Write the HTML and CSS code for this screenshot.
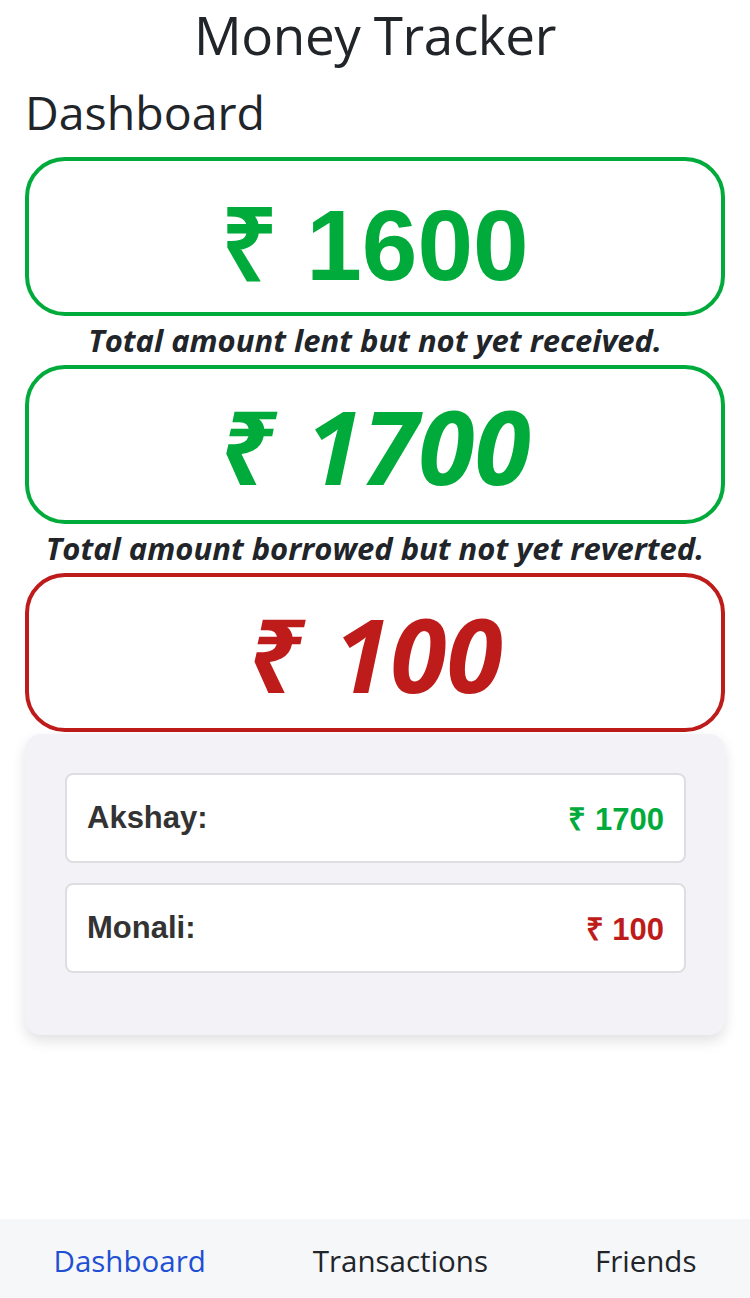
FILE: index.html
```html
<!DOCTYPE html>
<html lang="en">
<head>
<meta charset="utf-8">
<title>Money Tracker</title>
<link rel="stylesheet" href="styles.css">
</head>
<body>
<div class="page">
  <main class="main">
    <h1 class="title">Money Tracker</h1>
    <h2 class="heading">Dashboard</h2>
    <div class="amount-box green">
      <span class="amount plain">₹ 1600</span>
    </div>
    <p class="caption">Total amount lent but not yet received.</p>
    <div class="amount-box green">
      <span class="amount italic">₹ 1700</span>
    </div>
    <p class="caption">Total amount borrowed but not yet reverted.</p>
    <div class="amount-box red">
      <span class="amount italic">₹ 100</span>
    </div>
    <section class="panel">
      <div class="friend-card">
        <span class="friend-name">Akshay:</span>
        <span class="friend-amount pos">₹ 1700</span>
      </div>
      <div class="friend-card">
        <span class="friend-name">Monali:</span>
        <span class="friend-amount neg">₹ 100</span>
      </div>
    </section>
  </main>
  <nav class="bottom-nav">
    <a class="nav-item active">Dashboard</a>
    <a class="nav-item">Transactions</a>
    <a class="nav-item">Friends</a>
  </nav>
</div>
</body>
</html>
```

FILE: styles.css
```css
html, body {
  margin: 0;
  padding: 0;
  background: #ffffff;
}
body {
  font-family: "Open Sans", "Noto Sans", sans-serif;
  color: #212529;
}
.page {
  min-height: 100vh;
  display: flex;
  flex-direction: column;
}
.main {
  flex: 1;
  padding: 0 25px;
}
.title {
  margin: 0;
  text-align: center;
  font-size: 53px;
  font-weight: 500;
  letter-spacing: -0.4px;
  line-height: 69px;
}
.heading {
  margin: 16px 0 18px;
  font-size: 46.5px;
  font-weight: 500;
  line-height: 54px;
}
.amount-box {
  box-sizing: border-box;
  height: 159px;
  border: 4px solid;
  border-radius: 40px;
  display: flex;
  align-items: center;
  justify-content: center;
}
.amount-box.green { border-color: #00aa3b; color: #00aa3b; }
.amount-box.red { border-color: #be1b1b; color: #be1b1b; }
.amount {
  font-size: 100px;
  font-weight: 700;
  white-space: nowrap;
}
.amount.plain {
  font-family: "Liberation Sans", Arial, sans-serif;
  padding-top: 8px;
}
.amount.italic {
  font-size: 102px;
  font-style: italic;
  padding-top: 2px;
  word-spacing: 4px;
}
.caption {
  margin: 0;
  text-align: center;
  font-size: 31px;
  font-weight: 700;
  font-style: italic;
  line-height: 49px;
  white-space: nowrap;
}
.panel {
  margin-top: 2px;
  background: #f3f3f7;
  border-radius: 16px;
  padding: 39px 39px 42px 40px;
  box-shadow: 0 6px 14px rgba(0, 0, 0, 0.12);
}
.friend-card {
  box-sizing: border-box;
  height: 90px;
  margin-bottom: 20px;
  background: #ffffff;
  border: 2px solid #dedee2;
  border-radius: 8px;
  padding: 0 20px;
  display: flex;
  align-items: center;
  justify-content: space-between;
  font-family: "Liberation Sans", Arial, sans-serif;
  font-weight: 700;
  font-size: 31px;
}
.friend-name { color: #333333; }
.friend-amount.pos { color: #00aa3b; }
.friend-amount.neg { color: #be1b1b; }
.bottom-nav {
  height: 79px;
  background: #f6f7f9;
  display: flex;
  justify-content: space-around;
  align-items: center;
}
.nav-item {
  font-size: 29.5px;
  color: #212529;
  text-decoration: none;
  padding-top: 4px;
}
.nav-item.active { color: #1f4fd3; }
```
